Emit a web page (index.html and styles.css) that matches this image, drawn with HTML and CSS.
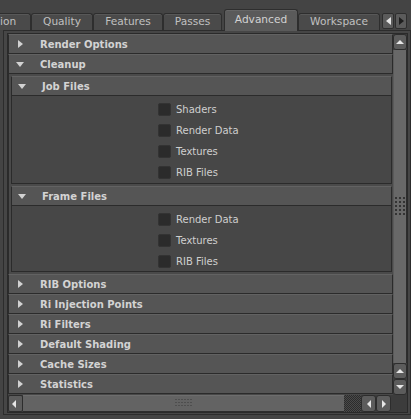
FILE: index.html
```html
<!DOCTYPE html>
<html>
<head>
<meta charset="utf-8">
<link rel="stylesheet" href="styles.css">
</head>
<body>
<div class="tabbar">
  <div class="tab first">ion</div>
  <div class="tab w-quality">Quality</div>
  <div class="tab w-features">Features</div>
  <div class="tab w-passes">Passes</div>
  <div class="tab active">Advanced</div>
  <div class="tab w-workspace">Workspace</div>
  <div class="tabarrows">
    <span class="tbtn"><i class="tri left"></i></span>
    <span class="tbtn"><i class="tri right dim"></i></span>
  </div>
</div>
<div class="panel">
  <div class="view">
    <div class="main">
      <div class="rows">
        <div class="hdr"><span class="ic r"><i class="tri right"></i></span>Render Options</div>
        <div class="hdr"><span class="ic d"><i class="tri down"></i></span>Cleanup</div>
        <div class="cbody">
          <div class="hdr sub"><span class="ic d"><i class="tri down"></i></span>Job Files</div>
          <div class="box box1">
            <div class="cb"><span class="chk"></span>Shaders</div>
            <div class="cb"><span class="chk"></span>Render Data</div>
            <div class="cb"><span class="chk"></span>Textures</div>
            <div class="cb"><span class="chk"></span>RIB Files</div>
          </div>
          <div class="hdr sub"><span class="ic d"><i class="tri down"></i></span>Frame Files</div>
          <div class="box box2">
            <div class="cb"><span class="chk"></span>Render Data</div>
            <div class="cb"><span class="chk"></span>Textures</div>
            <div class="cb"><span class="chk"></span>RIB Files</div>
          </div>
        </div>
        <div class="hdr"><span class="ic r"><i class="tri right"></i></span>RIB Options</div>
        <div class="hdr"><span class="ic r"><i class="tri right"></i></span>Ri Injection Points</div>
        <div class="hdr"><span class="ic r"><i class="tri right"></i></span>Ri Filters</div>
        <div class="hdr"><span class="ic r"><i class="tri right"></i></span>Default Shading</div>
        <div class="hdr"><span class="ic r"><i class="tri right"></i></span>Cache Sizes</div>
        <div class="hdr"><span class="ic r"><i class="tri right"></i></span>Statistics</div>
      </div>
      <div class="vscroll">
        <span class="sbtn"><i class="tri up"></i></span>
        <div class="vthumb"><span class="grip vgrip"></span></div>
        <span class="sbtn"><i class="tri up"></i></span>
        <span class="sbtn"><i class="tri sdown"></i></span>
      </div>
    </div>
    <div class="hscroll">
      <span class="hbtn first-h"><i class="tri sleft"></i></span>
      <div class="hthumb"><span class="grip hgrip"></span></div>
      <div class="checker"></div>
      <span class="hbtn"><i class="tri sleft"></i></span>
      <span class="hbtn"><i class="tri sright"></i></span>
      <div class="corner"></div>
    </div>
  </div>
</div>
</body>
</html>
```
FILE: styles.css
```css
html, body {
  margin: 0;
  padding: 0;
}
body {
  width: 411px;
  height: 419px;
  overflow: hidden;
  background: #444444;
  font-family: "DejaVu Sans", sans-serif;
}

/* ---------- tabs ---------- */
.tabbar {
  display: flex;
  align-items: flex-end;
  height: 30px;
  position: relative;
  z-index: 2;
}
.tab {
  box-sizing: border-box;
  height: 17px;
  border: 1px solid #2e2e2e;
  border-bottom: none;
  border-radius: 3px 3px 0 0;
  background: #4a4a4a;
  box-shadow: inset 0 1px #585858;
  color: #c0c0c0;
  font-size: 10.6px;
  line-height: 15px;
  text-align: center;
  white-space: nowrap;
  overflow: hidden;
}
.first {
  width: 31px;
  text-align: left;
  border-left: none;
  border-radius: 0 3px 0 0;
  text-indent: 0;
}
.w-quality { width: 62px; }
.w-features { width: 70px; }
.w-passes { width: 59px; }
.w-workspace { width: 82px; }
.active {
  width: 74px;
  height: 22px;
  margin-left: 2px;
  margin-bottom: -1px;
  line-height: 19px;
  background: #5a5a5a;
  box-shadow: inset 0 1px #666;
  color: #d2d2d2;
}
.tabarrows {
  display: flex;
  gap: 1px;
  margin-left: 2px;
  margin-bottom: 1px;
}
.tbtn {
  box-sizing: border-box;
  width: 12px;
  height: 16px;
  background: #5b5b5b;
  border: 1px solid #2e2e2e;
  border-radius: 2px;
  display: flex;
  align-items: center;
  justify-content: center;
}

/* ---------- triangles ---------- */
.tri {
  display: block;
  width: 0;
  height: 0;
  border-style: solid;
}
.tri.right {
  border-width: 4px 0 4px 5px;
  border-color: transparent transparent transparent #d2d2d2;
}
.tri.left {
  border-width: 4px 5px 4px 0;
  border-color: transparent #e4e4e4 transparent transparent;
}
.tri.dim { border-left-color: #1e1e1e; }
.tri.down {
  border-width: 5px 4.5px 0 4.5px;
  border-color: #d2d2d2 transparent transparent transparent;
}
.tri.up {
  border-width: 0 4px 4px 4px;
  border-color: transparent transparent #e6e6e6 transparent;
}
.tri.sdown {
  border-width: 4px 4px 0 4px;
  border-color: #e6e6e6 transparent transparent transparent;
}
.tri.sleft {
  border-width: 4px 4px 4px 0;
  border-color: transparent #e6e6e6 transparent transparent;
}
.tri.sright {
  border-width: 4px 0 4px 4px;
  border-color: transparent transparent transparent #e6e6e6;
}

/* ---------- panel ---------- */
.panel {
  box-sizing: border-box;
  width: 408px;
  margin-left: 3px;
  border: 1px solid #2c2c2c;
  padding: 2px 2px 1px 3px;
  background: #464646;
}
.view {
  border: 1px solid #2a2a2a;
  background: #444;
}
.main {
  display: grid;
  grid-template-columns: 385px 14px;
  height: 361px;
}
.rows {
  overflow: hidden;
  background: #484848;
}

.hdr {
  box-sizing: border-box;
  height: 20px;
  display: flex;
  align-items: center;
  background: #555555;
  border-top: 1px solid #626262;
  border-bottom: 1px solid #2b2b2b;
  border-left: 1px solid #2b2b2b;
  border-right: 1px solid #2b2b2b;
  font-weight: bold;
  font-size: 10px;
  color: #d3d3d3;
  white-space: nowrap;
}
.ic {
  box-sizing: border-box;
  width: 31px;
  height: 10px;
  display: flex;
  align-items: center;
  flex: none;
}
.ic.r { padding-left: 9px; }
.ic.d { padding-left: 7px; }
.sub .ic { width: 30px; padding-left: 6px; }

.cbody {
  box-sizing: border-box;
  height: 200px;
  padding: 2px 1px 2px 2px;
  border-left: 1px solid #2b2b2b;
  background: #4a4a4a;
  display: flex;
  flex-direction: column;
}
.box {
  box-sizing: border-box;
  border: 1px solid #2b2b2b;
  border-top: none;
  background: #474747;
  display: flex;
  flex-direction: column;
  gap: 8px;
  padding: 7px 0 0 146px;
}
.box1 { height: 88px; margin-bottom: 2px; }
.box2 { height: 66px; }
.cb {
  display: flex;
  align-items: center;
  gap: 5px;
  height: 13px;
  font-size: 10px;
  color: #cfcfcf;
  white-space: nowrap;
}
.chk {
  box-sizing: border-box;
  width: 13px;
  height: 13px;
  background: #2b2b2b;
  border: 1px solid #333;
  border-radius: 2px;
  flex: none;
}

/* ---------- vertical scrollbar ---------- */
.vscroll {
  display: flex;
  flex-direction: column;
  background: #3c3c3c;
}
.sbtn {
  box-sizing: border-box;
  height: 16px;
  background: #5c5c5c;
  border: 1px solid #2d2d2d;
  border-radius: 3px;
  display: flex;
  align-items: center;
  justify-content: center;
  flex: none;
}
.vthumb {
  box-sizing: border-box;
  height: 313px;
  background: #686868;
  border-left: 1px solid #5a5a5a;
  border-right: 1px solid #2d2d2d;
  padding-top: 147px;
  display: flex;
  justify-content: center;
  flex: none;
}
.grip {
  display: block;
  background-color: #333;
  background-image:
    linear-gradient(90deg, transparent 2px, #686868 2px),
    linear-gradient(transparent 2px, #686868 2px);
  background-size: 4px 4px;
}
.vgrip { width: 10px; height: 18px; }

/* ---------- horizontal scrollbar ---------- */
.hscroll {
  display: flex;
  height: 17px;
  background: #3c3c3c;
}
.hbtn {
  box-sizing: border-box;
  width: 15px;
  height: 17px;
  background: #5c5c5c;
  border: 1px solid #2d2d2d;
  border-radius: 3px;
  display: flex;
  align-items: center;
  justify-content: center;
  flex: none;
}
.first-h { border-radius: 2px; justify-content: flex-start; padding-left: 3px; }
.hthumb {
  box-sizing: border-box;
  width: 321px;
  background: #636363;
  border-top: 1px solid #6d6d6d;
  border-bottom: 1px solid #2d2d2d;
  padding: 3px 0 0 152px;
  flex: none;
}
.hgrip {
  width: 18px;
  height: 9px;
  background-color: #4e4e4e;
  background-image:
    linear-gradient(90deg, transparent 2px, #636363 2px),
    linear-gradient(transparent 1px, #636363 1px);
  background-size: 3px 3px;
}
.checker {
  width: 17px;
  flex: none;
  background: conic-gradient(#2c2c2c 25%, #4a4a4a 0 50%, #2c2c2c 0 75%, #4a4a4a 0);
  background-size: 2px 2px;
}
.corner {
  flex: 1;
  background: #3c3c3c;
}
```
